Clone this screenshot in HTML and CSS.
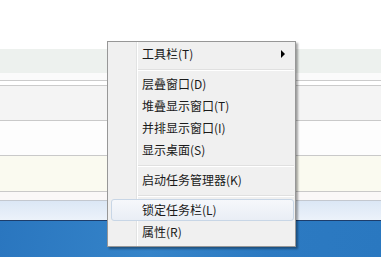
FILE: index.html
```html
<!DOCTYPE html>
<html lang="zh-CN">
<head>
<meta charset="utf-8">
<title>任务栏菜单</title>
<link rel="stylesheet" href="styles.css">
</head>
<body>
<div class="desktop">
  <div class="band band-white"></div>
  <div class="band band-green"></div>
  <div class="band band-gap"></div>
  <div class="band band-thin"></div>
  <div class="band band-gray"></div>
  <div class="band band-plain"></div>
  <div class="band band-yellow"></div>
  <div class="band band-pink"></div>
  <div class="band band-lightblue"></div>
  <div class="band band-taskbar"></div>
</div>
<div class="menu">
  <div class="item"><span class="label">工具栏(T)</span><span class="arrow"></span></div>
  <div class="sep"></div>
  <div class="item"><span class="label">层叠窗口(D)</span></div>
  <div class="item"><span class="label">堆叠显示窗口(T)</span></div>
  <div class="item"><span class="label">并排显示窗口(I)</span></div>
  <div class="item"><span class="label">显示桌面(S)</span></div>
  <div class="sep"></div>
  <div class="item"><span class="label">启动任务管理器(K)</span></div>
  <div class="sep"></div>
  <div class="item item-hover"><span class="label">锁定任务栏(L)</span></div>
  <div class="item"><span class="label">属性(R)</span></div>
</div>
</body>
</html>
```
FILE: styles.css
```css
html, body {
  margin: 0;
  padding: 0;
  width: 381px;
  height: 257px;
  overflow: hidden;
  background: #ffffff;
  font-family: "Noto Sans CJK SC", "Noto Sans", sans-serif;
}
.desktop {
  display: flex;
  flex-direction: column;
  width: 381px;
  height: 257px;
}
.band { flex: none; }
.band-white { height: 49px; background: #ffffff; }
.band-green { height: 24px; background: #edf1ee; }
.band-gap { height: 7px; background: #fbfbfb; border-bottom: 1px solid #cbcbcb; }
.band-thin { height: 4px; background: #ffffff; border-bottom: 1px solid #cbcbcb; }
.band-gray { height: 34px; background: #f4f4f4; border-bottom: 1px solid #c9c9c9; }
.band-plain { height: 34px; background: #fdfdfd; border-bottom: 1px solid #c9c9c9; }
.band-yellow { height: 35px; background: #fafaf0; border-bottom: 1px solid #c9c9c9; }
.band-pink { height: 8px; background: #faf8f8; border-bottom: 1px solid #c3c8cf; }
.band-lightblue { height: 19px; background: linear-gradient(#dbe7f5, #ecf2fa); border-bottom: 1px solid #1d3d6b; }
.band-taskbar { height: 37px; background: linear-gradient(100deg, #2a76bf 0%, #3584c9 40%, #2c7ac2 70%, #2a78c0 100%); }

.menu {
  position: absolute;
  left: 107px;
  top: 41px;
  width: 187px;
  height: 204px;
  padding: 1px 0 3px 0;
  box-sizing: content-box;
  border: 1px solid #979797;
  box-shadow: 2px 2px 2px rgba(0, 0, 0, 0.35);
  background: linear-gradient(to right, #f0f0f0 0, #f0f0f0 28px, #e2e3e3 28px, #e2e3e3 29px, #ffffff 29px, #ffffff 30px, #f0f0f0 30px);
  display: flex;
  flex-direction: column;
}
.menu { height: auto; }
.item {
  height: 22px;
  box-sizing: border-box;
  margin: 0 1px 0 3px;
  padding-left: 30px;
  padding-right: 8px;
  border: 1px solid transparent;
  border-radius: 3px;
  display: flex;
  align-items: center;
  font-size: 12px;
  line-height: 16px;
  color: #1a1a1a;
}
.item-hover {
  border-color: #c8d6e6;
  background: linear-gradient(#f6f8fb, #e9eef5);
}
.label { white-space: nowrap; }
.arrow {
  margin-left: auto;
  width: 0;
  height: 0;
  border-top: 4px solid transparent;
  border-bottom: 4px solid transparent;
  border-left: 4px solid #000000;
}
.sep {
  height: 8px;
  margin-left: 30px;
  margin-right: 1px;
  background: linear-gradient(#f0f0f0 0, #f0f0f0 4px, #e0e0e0 4px, #e0e0e0 5px, #ffffff 5px, #ffffff 6px, #f0f0f0 6px);
}
```
